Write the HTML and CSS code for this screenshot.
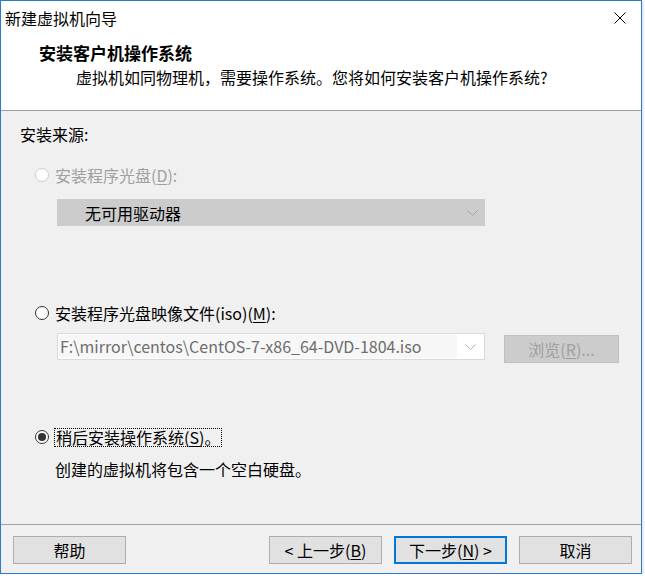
FILE: index.html
```html
<!DOCTYPE html>
<html lang="zh-CN">
<head>
<meta charset="utf-8">
<title>新建虚拟机向导</title>
<link rel="stylesheet" href="styles.css">
</head>
<body>
<div class="window">
  <div class="titlebar">
    <span class="title-text">新建虚拟机向导</span>
    <span class="close-btn"><svg width="12" height="12" viewBox="0 0 12 12"><path d="M0.5 0.5 L11.5 11.5 M11.5 0.5 L0.5 11.5" stroke="#000" stroke-width="1" fill="none"/></svg></span>
  </div>
  <div class="header">
    <div class="header-title">安装客户机操作系统</div>
    <div class="header-sub">虚拟机如同物理机，需要操作系统。您将如何安装客户机操作系统?</div>
  </div>
  <div class="content">
    <div class="section-label">安装来源:</div>
    <div class="radio-row disabled row-1">
      <span class="radio"></span><span class="radio-label">安装程序光盘(<u>D</u>):</span>
    </div>
    <div class="combo combo-disabled">
      <span class="combo-text">无可用驱动器</span>
      <span class="chev"><svg width="11" height="6" viewBox="0 0 11 6"><path d="M0.5 0.5 L5.5 5.5 L10.5 0.5" stroke="#a6a6a6" stroke-width="1" fill="none"/></svg></span>
    </div>
    <div class="radio-row row-2">
      <span class="radio"></span><span class="radio-label">安装程序光盘映像文件(iso)(<u>M</u>):</span>
    </div>
    <div class="iso-row">
      <div class="combo combo-iso">
        <span class="combo-text">F:\mirror\centos\CentOS-7-x86_64-DVD-1804.iso</span>
        <span class="chev"><svg width="11" height="6" viewBox="0 0 11 6"><path d="M0.5 0.5 L5.5 5.5 L10.5 0.5" stroke="#b4b4b4" stroke-width="1" fill="none"/></svg></span>
      </div>
      <div class="browse-btn">浏览(<u>R</u>)...</div>
    </div>
    <div class="radio-row row-3">
      <span class="radio checked"><span class="dot"></span></span><span class="radio-label focused">稍后安装操作系统(<u>S</u>)。</span>
    </div>
    <div class="desc">创建的虚拟机将包含一个空白硬盘。</div>
  </div>
  <div class="footer">
    <div class="btn">帮助</div>
    <div class="spacer"></div>
    <div class="btn">&lt; 上一步(<u>B</u>)</div>
    <div class="btn btn-default">下一步(<u>N</u>) &gt;</div>
    <div class="btn">取消</div>
  </div>
</div>
</body>
</html>
```

FILE: styles.css
```css
* { box-sizing: border-box; }
body {
  margin: 0;
  background: #ffffff;
  font-family: "Noto Sans CJK SC", sans-serif;
  font-size: 16px;
  color: #000;
}
u { text-decoration: underline; text-underline-offset: 2px; }

.window {
  width: 642px;
  height: 574px;
  border: 1px solid #2b7bd0;
  background: #f0f0f0;
  display: flex;
  flex-direction: column;
  box-shadow: 0 1px 4px rgba(0,0,0,0.25);
}

.titlebar {
  height: 33px;
  background: #fff;
  display: flex;
  align-items: center;
}
.title-text {
  padding-left: 4px;
  line-height: 20px;
  flex: 1;
}
.close-btn {
  width: 43px;
  height: 33px;
  display: flex;
  align-items: center;
  justify-content: center;
}
.close-btn svg { display: block; }

.header {
  height: 77px;
  background: #fff;
  border-bottom: 1px solid #a0a0a0;
  padding-top: 9px;
}
.header-title {
  font-weight: bold;
  font-size: 17px;
  padding-left: 38px;
  line-height: 20px;
}
.header-sub {
  padding-left: 75px;
  margin-top: 4px;
  line-height: 20px;
}

.content {
  flex: 1;
  padding-top: 13px;
}
.section-label {
  padding-left: 19px;
  line-height: 20px;
}

.radio-row {
  display: flex;
  align-items: center;
  height: 20px;
  padding-left: 34px;
  gap: 6px;
}
.radio {
  width: 14px;
  height: 14px;
  border: 1px solid #333;
  border-radius: 50%;
  background: #fff;
  display: flex;
  align-items: center;
  justify-content: center;
  flex: none;
}
.radio .dot {
  width: 8px;
  height: 8px;
  border-radius: 50%;
  background: #333;
}
.radio-label { line-height: 20px; }
.disabled .radio { border-color: #cccccc; }
.disabled .radio-label { color: #a0a0a0; }
.focused {
  line-height: 17px;
  outline: 1px dotted #000;
  outline-offset: 0;
  padding: 0 1px;
}

.row-1 { margin-top: 21px; }
.row-2 { margin-top: 77px; }
.row-3 { margin-top: 64px; }

.combo {
  width: 428px;
  height: 27px;
  display: flex;
  align-items: center;
}
.combo-disabled {
  margin-left: 56px;
  margin-top: 14px;
  background: #cccccc;
}
.combo-disabled .combo-text {
  flex: 1;
  padding-left: 28px;
  color: #000;
}
.chev {
  width: 26px;
  height: 100%;
  display: flex;
  align-items: center;
  justify-content: center;
}
.chev svg { display: block; }

.iso-row {
  display: flex;
  align-items: flex-start;
  margin-top: 10px;
  padding-left: 56px;
}
.combo-iso {
  background: #ffffff;
  border: 1px solid #d9d9d9;
  padding: 1px;
}
.combo-iso .combo-text {
  flex: 1;
  height: 100%;
  background: #f7f7f7;
  color: #6d6d6d;
  padding-left: 1px;
  line-height: 23px;
  white-space: nowrap;
  overflow: hidden;
}
.browse-btn {
  margin-left: 19px;
  margin-top: 2px;
  width: 115px;
  height: 28px;
  background: #cccccc;
  border: 1px solid #bfbfbf;
  color: #a0a0a0;
  display: flex;
  align-items: center;
  justify-content: center;
}

.desc {
  margin-top: 12px;
  padding-left: 54px;
  line-height: 20px;
}

.footer {
  height: 49px;
  border-top: 1px solid #a0a0a0;
  display: flex;
  align-items: flex-start;
  padding: 11px 9px 0 12px;
  gap: 12px;
}
.spacer { flex: 1; }
.btn {
  width: 113px;
  height: 28px;
  background: #e1e1e1;
  border: 1px solid #adadad;
  display: flex;
  align-items: center;
  justify-content: center;
  line-height: 20px;
}
.btn-default {
  border: 2px solid #0078d7;
}
```
